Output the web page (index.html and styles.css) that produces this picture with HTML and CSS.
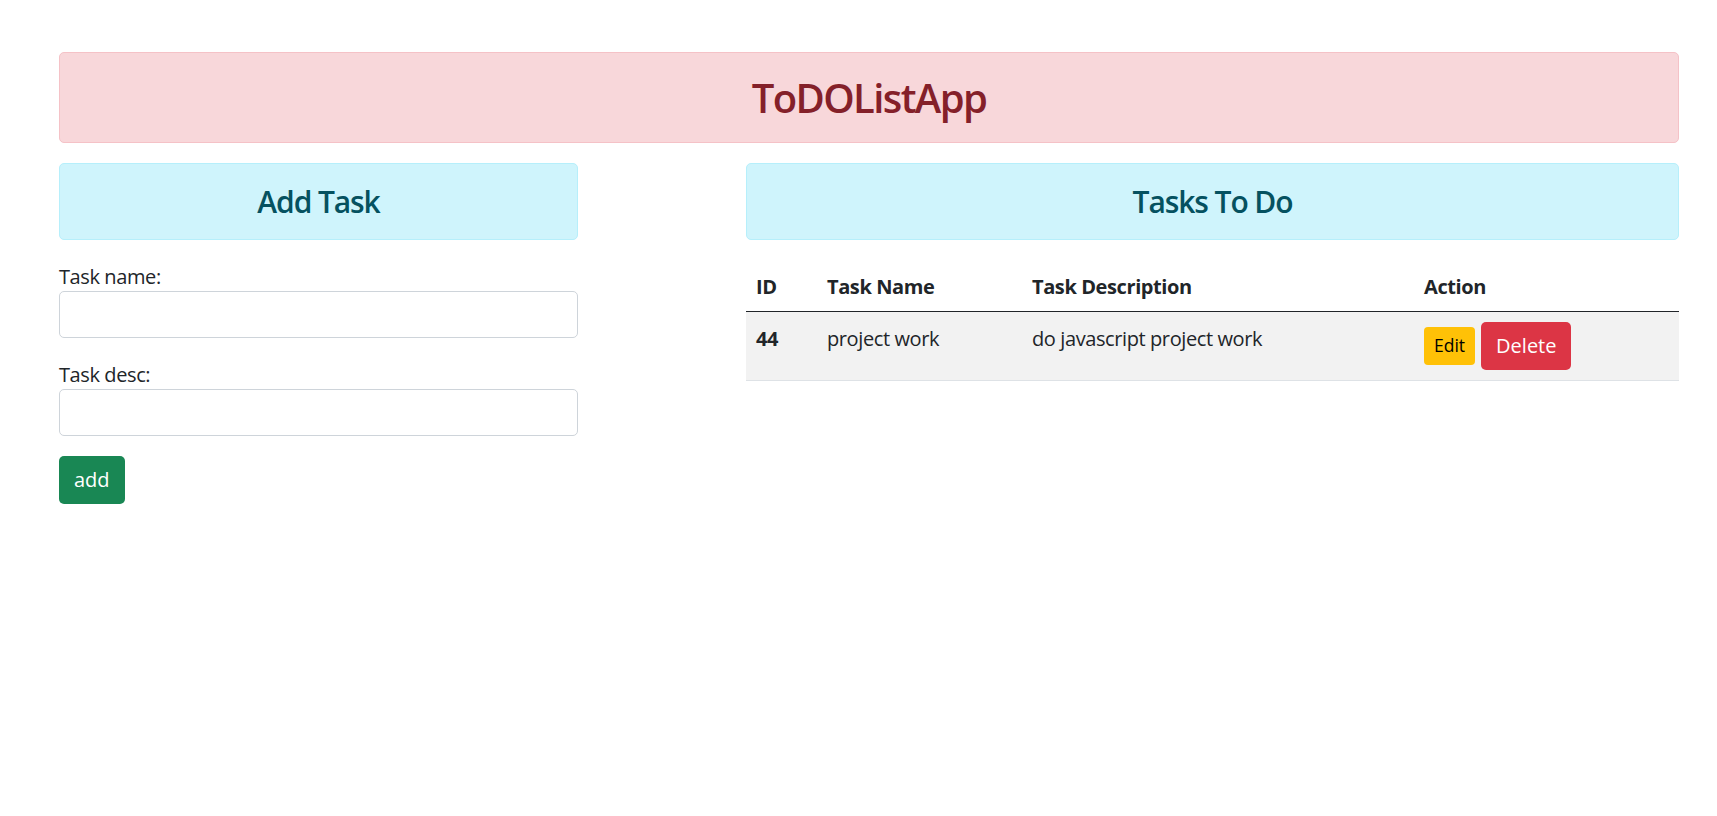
FILE: index.html
```html
<!DOCTYPE html>
<html lang="en">
<head>
<meta charset="utf-8">
<title>ToDOListApp</title>
<link rel="stylesheet" href="styles.css">
</head>
<body>
<div class="page">
  <div class="title-bar"><h1>ToDOListApp</h1></div>
  <div class="columns">
    <div class="left">
      <div class="section-head"><h2>Add Task</h2></div>
      <div class="form-group">
        <label for="tname">Task name:</label>
        <input id="tname" type="text" class="field">
      </div>
      <div class="form-group">
        <label for="tdesc">Task desc:</label>
        <input id="tdesc" type="text" class="field">
      </div>
      <button class="btn btn-add">add</button>
    </div>
    <div class="right">
      <div class="section-head"><h2>Tasks To Do</h2></div>
      <table class="tasks">
        <colgroup>
          <col class="c-id"><col class="c-name"><col class="c-desc"><col class="c-act">
        </colgroup>
        <thead>
          <tr><th>ID</th><th>Task Name</th><th>Task Description</th><th>Action</th></tr>
        </thead>
        <tbody>
          <tr>
            <th>44</th>
            <td>project work</td>
            <td>do javascript project work</td>
            <td><div class="actions"><button class="btn btn-edit">Edit</button><button class="btn btn-delete">Delete</button></div></td>
          </tr>
        </tbody>
      </table>
    </div>
  </div>
</div>
</body>
</html>
```
FILE: styles.css
```css
* { box-sizing: border-box; }
body {
  margin: 0;
  font-family: "Segoe UI", "Open Sans", "Noto Sans", sans-serif;
  font-size: 20px;
  line-height: 1.5;
  letter-spacing: -0.4px;
  color: #212529;
  background: #fff;
}
.page {
  padding: 52px 38px 0 59px;
}
.title-bar {
  background: #f8d7da;
  border: 1px solid #f5c2c7;
  border-radius: 5px;
  padding: 20px;
  margin-bottom: 20px;
  text-align: center;
}
.title-bar h1 {
  margin: 0;
  font-size: 40px;
  line-height: 49px;
  font-weight: 600;
  letter-spacing: -1.6px;
  color: #842029;
}
.columns {
  display: grid;
  grid-template-columns: 519px 1fr;
  column-gap: 168px;
}
.section-head {
  background: #cff4fc;
  border: 1px solid #b6effb;
  border-radius: 5px;
  padding: 20px;
  margin-bottom: 20px;
  text-align: center;
}
.section-head h2 {
  margin: 0;
  font-size: 30px;
  line-height: 35px;
  font-weight: 600;
  letter-spacing: -1.1px;
  color: #055160;
}
.form-group { margin-bottom: 20px; }
.form-group label { display: block; line-height: 30px; padding-top: 2px; margin-bottom: -1px; }
.field {
  display: block;
  width: 100%;
  height: 47px;
  border: 1px solid #ced4da;
  border-radius: 5px;
  padding: 0 15px;
  font: inherit;
  background: #fff;
}
.btn {
  border: none;
  font-family: inherit;
  cursor: pointer;
  line-height: 1;
  letter-spacing: 0;
}
.btn-add {
  height: 48px;
  padding: 0 15px;
  font-size: 20px;
  border-radius: 5px;
  background: #198754;
  color: #fff;
}
.tasks {
  width: 100%;
  border-collapse: collapse;
  table-layout: fixed;
}
.c-id { width: 71px; }
.c-name { width: 205px; }
.c-desc { width: 392px; }
.tasks th, .tasks td {
  padding: 10px;
  text-align: left;
  vertical-align: top;
  line-height: 30px;
}
.tasks thead th { padding-top: 12px; padding-bottom: 9px; }
.tasks th { font-weight: 700; }
.tasks thead th { border-bottom: 1px solid #212529; }
.tasks tbody tr { background: #f2f2f2; }
.tasks tbody th, .tasks tbody td { border-bottom: 1px solid #dee2e6; padding-top: 12px; padding-bottom: 10px; }
.actions {
  display: flex;
  align-items: center;
  gap: 6px;
  margin-top: -2px;
}
.btn-edit {
  height: 38px;
  padding: 0 10px;
  font-size: 17.5px;
  border-radius: 4px;
  background: #ffc107;
  color: #000;
}
.btn-delete {
  height: 48px;
  padding: 0 15px;
  font-size: 20px;
  border-radius: 5px;
  background: #dc3545;
  color: #fff;
}
```
